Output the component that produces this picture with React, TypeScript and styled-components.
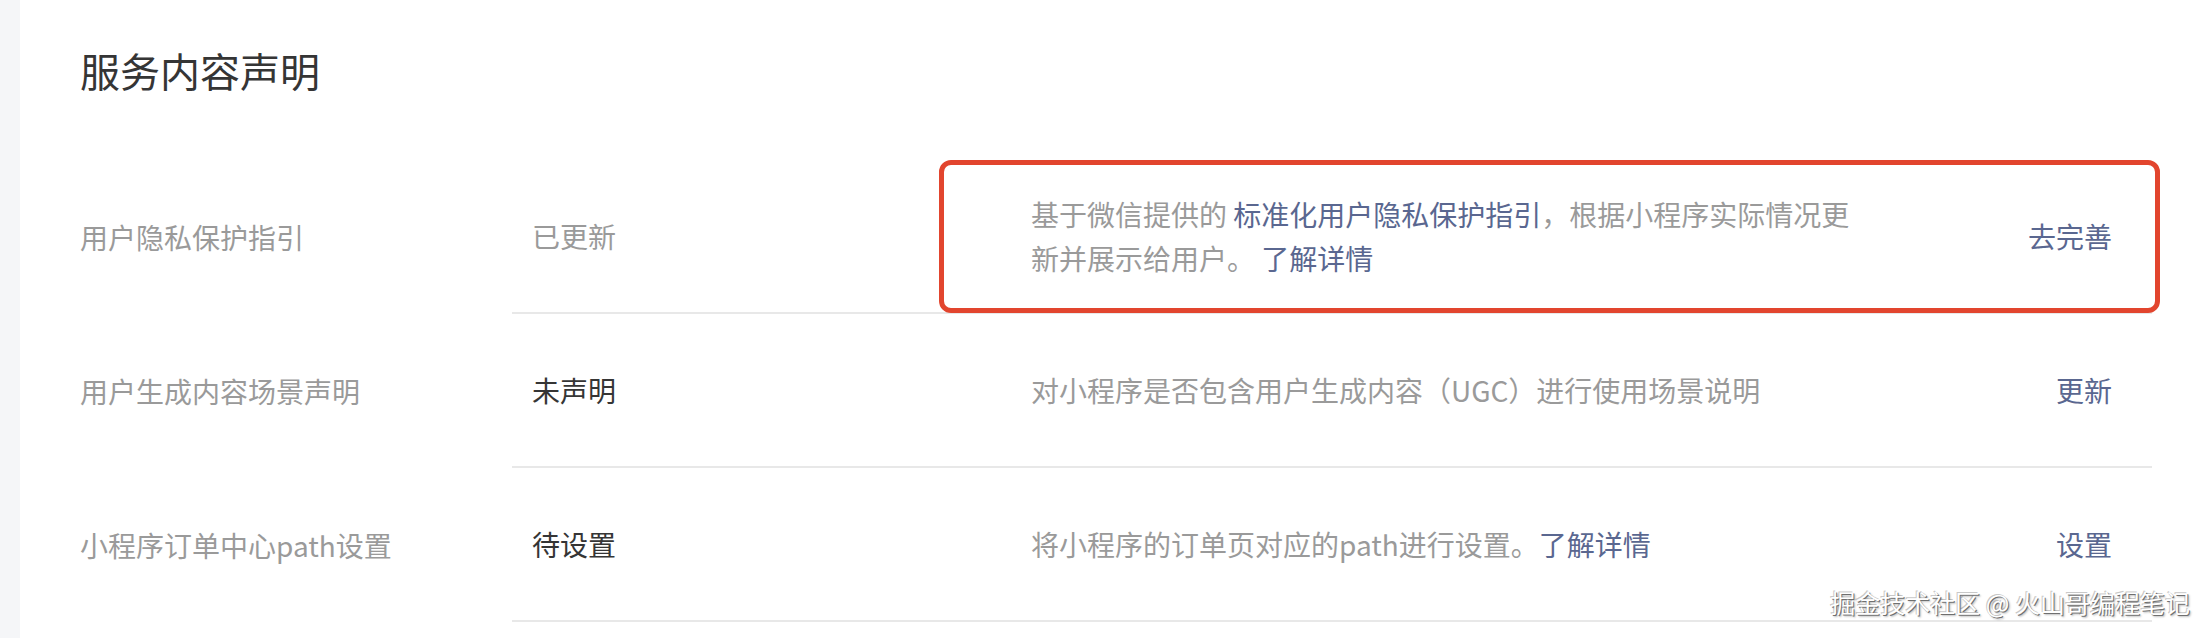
import React from "react";
import styled, { createGlobalStyle } from "styled-components";

const GlobalStyle = createGlobalStyle`
  html, body {
    margin: 0;
    padding: 0;
    background: #fff;
  }
  body {
    font-family: "Noto Sans CJK SC", "Noto Sans", sans-serif;
    color: #353535;
  }
`;

const Page = styled.div`
  position: relative;
  display: flex;
  min-height: 638px;
  overflow: hidden;
`;

const Sidebar = styled.div`
  width: 20px;
  flex-shrink: 0;
  background-color: #f5f6f8;
`;

const Main = styled.main`
  flex: 1;
  padding: 42px 0 0 60px;
`;

const Title = styled.h1`
  margin: 0 0 62px;
  font-size: 40px;
  line-height: 56px;
  font-weight: 400;
  color: #353535;
`;

const Table = styled.div`
  width: 2072px;
`;

const Row = styled.div`
  display: flex;
  align-items: stretch;
`;

const Label = styled.div`
  width: 432px;
  flex-shrink: 0;
  display: flex;
  align-items: center;
  font-size: 28px;
  color: #9a9a9a;
`;

const Cells = styled.div<{ $highlight?: boolean }>`
  position: relative;
  flex: 1;
  display: flex;
  align-items: center;
  height: 152px;
  border-bottom: 2px solid #e8e8e8;

  ${(p) =>
    p.$highlight &&
    `
    &::after {
      content: "";
      position: absolute;
      left: 427px;
      right: -8px;
      top: 0;
      bottom: -1px;
      border: 5px solid #e2452e;
      border-radius: 12px;
      pointer-events: none;
    }
  `}
`;

const Status = styled.div<{ $muted?: boolean }>`
  width: 519px;
  flex-shrink: 0;
  padding-left: 20px;
  box-sizing: border-box;
  font-size: 28px;
  color: ${(p) => (p.$muted ? "#9a9a9a" : "#353535")};
`;

const Desc = styled.div`
  width: 830px;
  font-size: 28px;
  line-height: 44px;
  color: #9a9a9a;
`;

const Link = styled.a`
  color: #5a6790;
  text-decoration: none;
  cursor: pointer;
`;

const Action = styled(Link)`
  margin-left: auto;
  padding-right: 40px;
  font-size: 28px;
  line-height: 44px;
`;

const Watermark = styled.div`
  position: absolute;
  right: 20px;
  bottom: 20px;
  font-size: 25px;
  line-height: 32px;
  color: #fff;
  text-shadow: 1px 1px 0 #6f6f6f, 2px 2px 2px rgba(0, 0, 0, 0.25),
    -1px -1px 0 #c8c8c8;
`;

const rows = [
  {
    label: "用户隐私保护指引",
    status: "已更新",
    muted: true,
    action: "去完善",
    highlight: true,
    desc: (
      <>
        基于微信提供的 <Link>标准化用户隐私保护指引</Link>
        ，根据小程序实际情况更新并展示给用户。 <Link>了解详情</Link>
      </>
    ),
  },
  {
    label: "用户生成内容场景声明",
    status: "未声明",
    action: "更新",
    desc: <>对小程序是否包含用户生成内容（UGC）进行使用场景说明</>,
  },
  {
    label: "小程序订单中心path设置",
    status: "待设置",
    action: "设置",
    desc: (
      <>
        将小程序的订单页对应的path进行设置。<Link>了解详情</Link>
      </>
    ),
  },
];

export default function App() {
  return (
    <>
      <GlobalStyle />
      <Page>
        <Sidebar />
        <Main>
          <Title>服务内容声明</Title>
          <Table>
            {rows.map((row) => (
              <Row key={row.label}>
                <Label>{row.label}</Label>
                <Cells $highlight={row.highlight}>
                  <Status $muted={row.muted}>{row.status}</Status>
                  <Desc>{row.desc}</Desc>
                  <Action>{row.action}</Action>
                </Cells>
              </Row>
            ))}
          </Table>
        </Main>
        <Watermark>掘金技术社区 @ 火山哥编程笔记</Watermark>
      </Page>
    </>
  );
}
